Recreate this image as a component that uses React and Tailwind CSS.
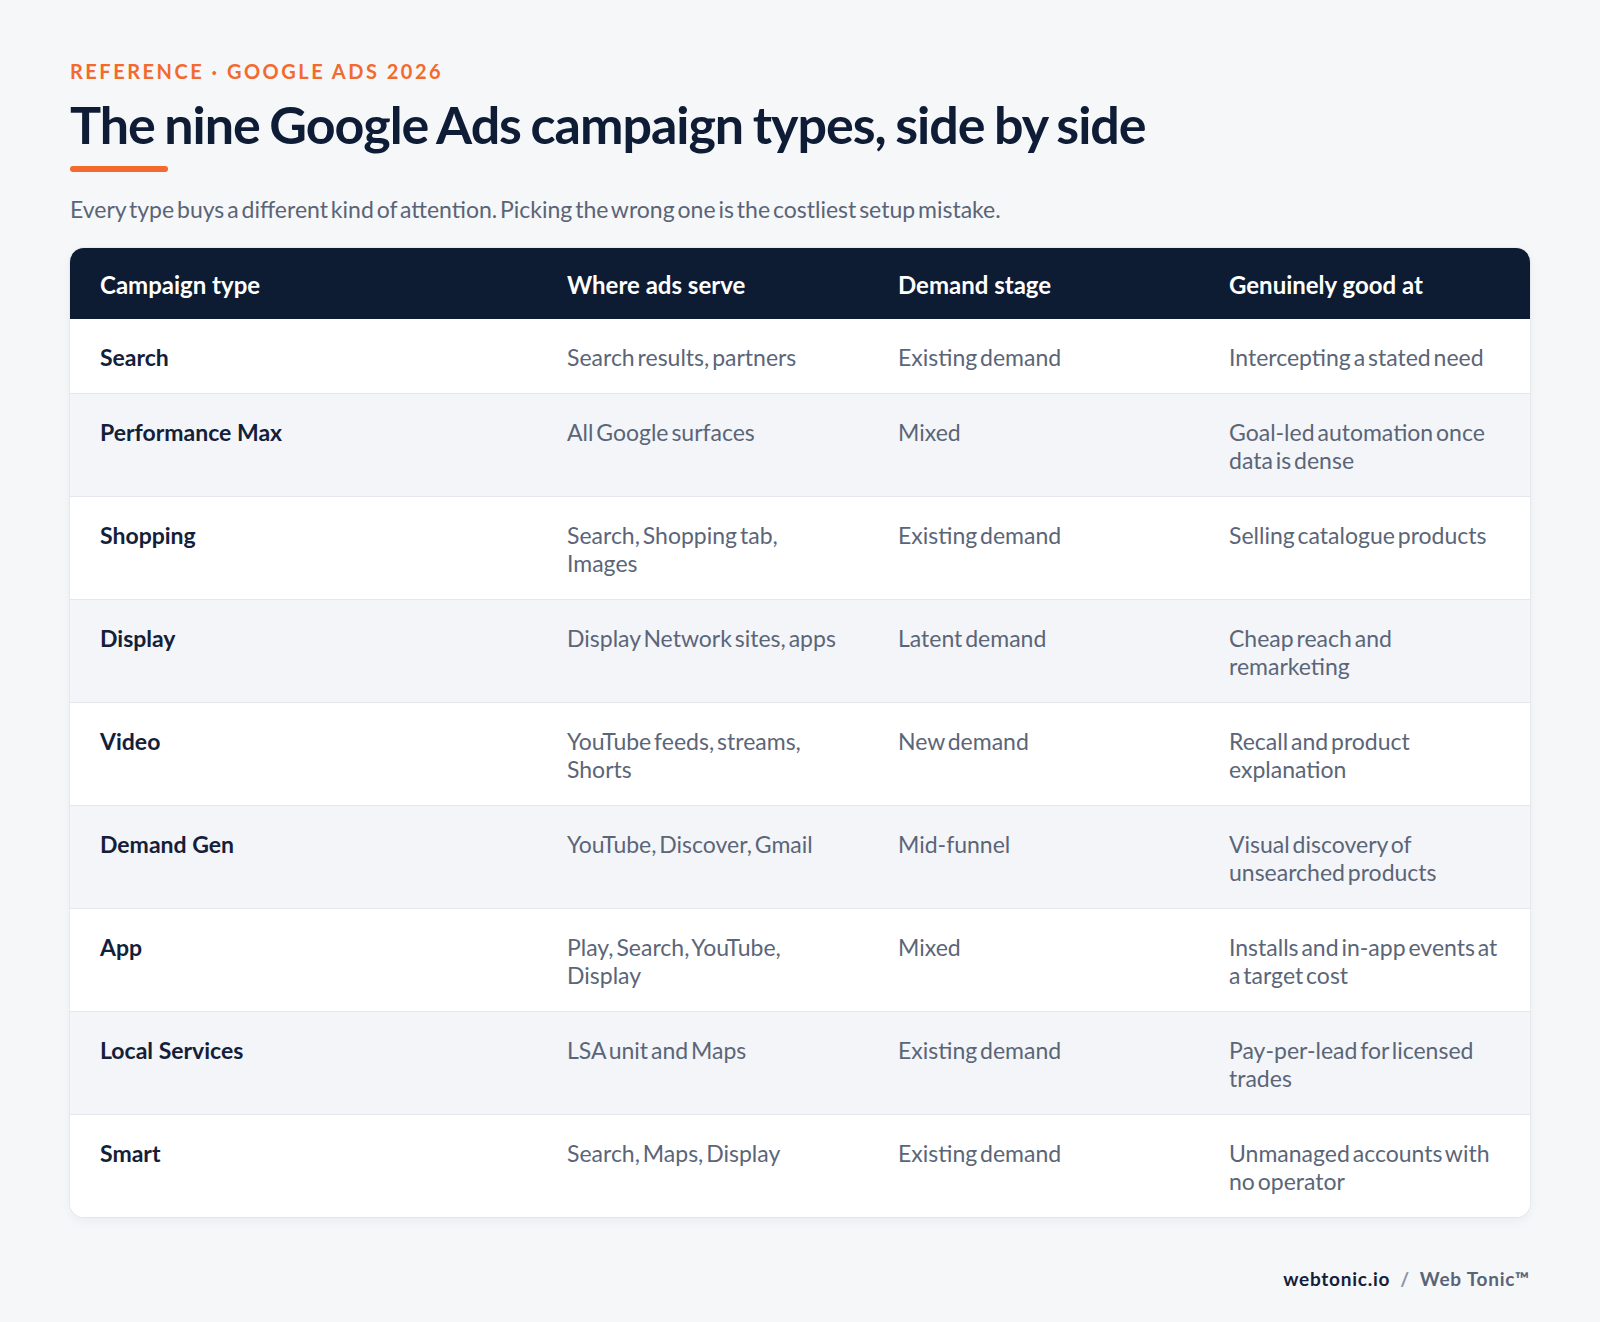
import React from 'react';

const rows = [
  { type: 'Search', where: 'Search results, partners', stage: 'Existing demand', good: 'Intercepting a stated need' },
  { type: 'Performance Max', where: 'All Google surfaces', stage: 'Mixed', good: 'Goal-led automation once data is dense' },
  { type: 'Shopping', where: 'Search, Shopping tab, Images', stage: 'Existing demand', good: 'Selling catalogue products' },
  { type: 'Display', where: 'Display Network sites, apps', stage: 'Latent demand', good: 'Cheap reach and remarketing' },
  { type: 'Video', where: 'YouTube feeds, streams, Shorts', stage: 'New demand', good: 'Recall and product explanation' },
  { type: 'Demand Gen', where: 'YouTube, Discover, Gmail', stage: 'Mid-funnel', good: 'Visual discovery of unsearched products' },
  { type: 'App', where: 'Play, Search, YouTube, Display', stage: 'Mixed', good: 'Installs and in-app events at a target cost' },
  { type: 'Local Services', where: 'LSA unit and Maps', stage: 'Existing demand', good: 'Pay-per-lead for licensed trades' },
  { type: 'Smart', where: 'Search, Maps, Display', stage: 'Existing demand', good: 'Unmanaged accounts with no operator' },
];

const App = () => {
  return (
    <div className="min-h-screen bg-[#f6f7f9] px-[70px] pt-[58px] pb-10 font-['Lato',sans-serif]">
      {/* Heading */}
      <div className="text-[20px] font-bold tracking-[0.125em] text-[#f26a2e] leading-[26px]">
        REFERENCE · GOOGLE ADS 2026
      </div>
      <h1 className="mt-[12px] text-[52px] font-bold leading-[56px] tracking-[-0.02em] [word-spacing:-2px] text-[#0f1c35]">
        The nine Google Ads campaign types, side by side
      </h1>
      <div className="mt-[14px] h-[6px] w-[98px] rounded-full bg-[#f26a2e]" />
      <p className="mt-[22px] text-[23px] leading-[30px] [word-spacing:-3px] text-[#5a6477]">
        Every type buys a different kind of attention. Picking the wrong one is the costliest setup mistake.
      </p>

      {/* Table */}
      <div className="mt-[24px] overflow-hidden rounded-[14px] bg-white shadow-[0_0_0_1px_rgba(15,28,53,0.04),0_4px_12px_rgba(15,28,53,0.05)]">
        <div className="grid grid-cols-[467px_1fr_1fr_1fr] bg-[#0d1b33] text-[24px] font-bold leading-[29px] text-white">
          <div className="pt-[22px] pb-[20px] pl-[30px]">Campaign type</div>
          <div className="pt-[22px] pb-[20px] pl-[30px]">Where ads serve</div>
          <div className="pt-[22px] pb-[20px] pl-[30px]">Demand stage</div>
          <div className="pt-[22px] pb-[20px] pl-[30px]">Genuinely good at</div>
        </div>
        {rows.map((r, i) => (
          <div
            key={r.type}
            className={`grid grid-cols-[467px_1fr_1fr_1fr] text-[23px] leading-[28px] ${i % 2 === 1 ? 'bg-[#f3f5f8]' : 'bg-white'} ${i < rows.length - 1 ? 'border-b border-[#e4e8ee]' : ''}`}
          >
            <div className="pt-[24px] pb-[22px] pl-[30px] pr-6 font-bold text-[#13203a]">{r.type}</div>
            <div className="pt-[24px] pb-[22px] pl-[30px] pr-[30px] [word-spacing:-3px] text-[#5b6578]">{r.where}</div>
            <div className="pt-[24px] pb-[22px] pl-[30px] pr-[30px] [word-spacing:-3px] text-[#5b6578]">{r.stage}</div>
            <div className="pt-[24px] pb-[22px] pl-[30px] pr-[26px] [word-spacing:-3px] text-[#5b6578]">{r.good}</div>
          </div>
        ))}
      </div>

      {/* Footer */}
      <div className="mt-[50px] flex justify-end text-[19px] font-bold tracking-[0.04em] leading-[24px]">
        <span className="text-[#13203a]">webtonic.io</span>
        <span className="mx-[10px] text-[#8a93a3]">/</span>
        <span className="text-[#5a6477]">Web Tonic™</span>
      </div>
    </div>
  );
};

export default App;
